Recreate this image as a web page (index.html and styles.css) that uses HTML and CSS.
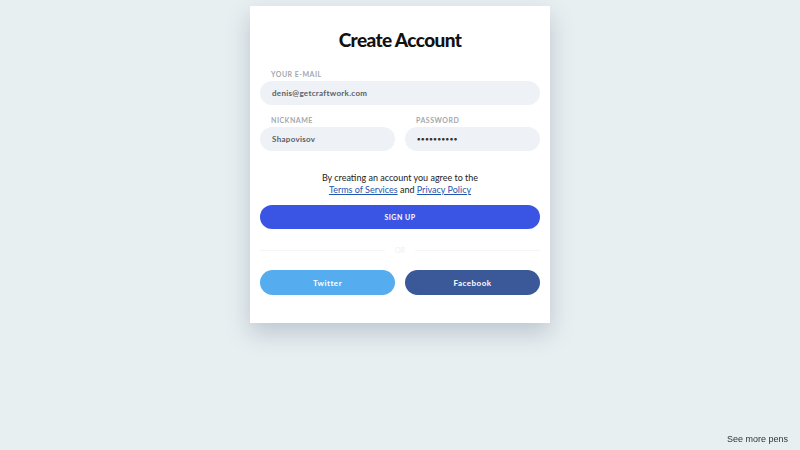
FILE: index.html
```html
<!DOCTYPE html>
<html lang="en">
<head>
    <meta charset="UTF-8">
    <meta name="viewport" content="width=device-width, initial-scale=1.0">
    <link rel="stylesheet" href="styles.css">
    <title>Create Account</title>
</head>
<body>
    <div class="card">
        <h1 class="title">Create Account</h1>

        <div class="field">
            <label class="label">Your e-mail</label>
            <div class="input">denis@getcraftwork.com</div>
        </div>

        <div class="row">
            <div class="field">
                <label class="label">Nickname</label>
                <div class="input">Shapovisov</div>
            </div>
            <div class="field">
                <label class="label">Password</label>
                <div class="input dots">&bull;&bull;&bull;&bull;&bull;&bull;&bull;&bull;&bull;&bull;</div>
            </div>
        </div>

        <p class="terms">
            By creating an account you agree to the<br>
            <a href="#">Terms of Services</a> and <a href="#">Privacy Policy</a>
        </p>

        <button class="btn signup">Sign up</button>

        <div class="divider"><span>or</span></div>

        <div class="row social">
            <button class="btn twitter">Twitter</button>
            <button class="btn facebook">Facebook</button>
        </div>
    </div>

    <a class="more" href="#">See more pens</a>
</body>
</html>
```

FILE: styles.css
```css
body {
    margin: 0;
    height: 450px;
    background-color: #e8eff1;
    font-family: Lato, "Open Sans", sans-serif;
    display: flex;
    justify-content: center;
    align-items: flex-start;
}

.card {
    width: 280px;
    margin-top: 6px;
    padding: 22px 10px 28px;
    background-color: #fff;
    box-shadow: 0 10px 22px rgba(60, 80, 110, 0.25);
}

.title {
    margin: 0 0 18px;
    text-align: center;
    font-size: 19px;
    line-height: 24px;
    font-weight: 900;
    color: #111;
    letter-spacing: -0.6px;
}

.field {
    flex: 1;
    margin-bottom: 11px;
}

.label {
    display: block;
    padding-left: 11px;
    margin-bottom: 3px;
    font-size: 7px;
    line-height: 8px;
    font-weight: 700;
    letter-spacing: 0.5px;
    text-transform: uppercase;
    color: #a3a8ad;
}

.input {
    height: 24px;
    padding: 0 12px;
    border-radius: 12px;
    background-color: #eef2f7;
    font-size: 8px;
    line-height: 24px;
    font-weight: 700;
    letter-spacing: 0.3px;
    color: #5a6068;
}

.input.dots {
    color: #333;
    font-size: 6px;
    letter-spacing: 0.6px;
}

.row {
    display: flex;
    gap: 10px;
}

.terms {
    margin: 10px 0 9px;
    text-align: center;
    font-size: 9px;
    line-height: 12px;
    color: #222;
}

.terms a {
    color: #1e56b0;
}

.btn {
    display: block;
    height: 24px;
    border: none;
    border-radius: 12px;
    font-family: inherit;
    font-size: 8px;
    font-weight: 700;
    color: #fff;
    letter-spacing: 0.5px;
    cursor: pointer;
}

.signup {
    width: 100%;
    background-color: #3a55e4;
    text-transform: uppercase;
    font-size: 7px;
}

.divider {
    display: flex;
    align-items: center;
    gap: 10px;
    margin: 15px 0 14px;
    font-size: 7px;
    line-height: 12px;
    text-transform: uppercase;
    color: #eef0f2;
}

.divider::before,
.divider::after {
    content: "";
    flex: 1;
    height: 1px;
    background-color: #f3f5f7;
}

.social .btn {
    flex: 1;
    height: 25px;
    border-radius: 13px;
}

.twitter {
    background-color: #55acee;
}

.facebook {
    background-color: #3b5998;
}

.more {
    position: fixed;
    right: 12px;
    bottom: 6px;
    font-family: "Liberation Sans", Arial, sans-serif;
    font-size: 9px;
    color: #333;
    text-decoration: none;
}
```
